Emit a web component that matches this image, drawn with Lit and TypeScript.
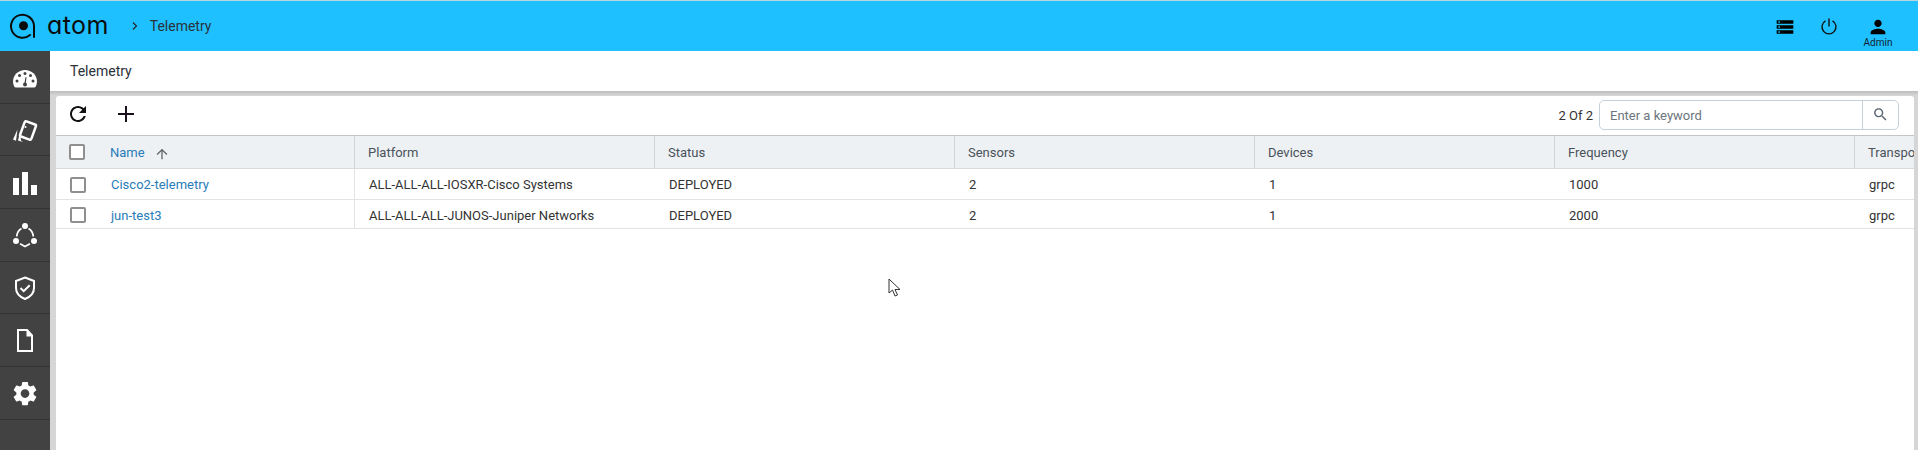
import { LitElement, html, css, svg } from "lit";
import { customElement } from "lit/decorators.js";

const sideIcons = [
  svg`<path fill="#fff" d="M13 6C6.400 6 1 11 1 17.500c0 1.800.4 3.400 1.200 5 .4.600 1 1 1.700 1h18.200c.7 0 1.300-.4 1.700-1 .8-1.600 1.200-3.200 1.200-5C25 11 19.600 6 13 6z"/><g fill="#424242"><circle cx="13" cy="9.500" r="1.500"/><circle cx="7.500" cy="11.500" r="1.500"/><circle cx="18.500" cy="11.500" r="1.500"/><circle cx="5" cy="17" r="1.500"/><circle cx="21" cy="17" r="1.500"/><circle cx="13" cy="20.500" r="2"/><path d="M12.200 20.500l1.300-7.500 1 .2-.8 7.500z"/></g>`,
  svg`<rect x="10" y="5.500" width="12" height="16" rx="1.500" fill="none" stroke="#fff" stroke-width="2.500" transform="rotate(20 16 13.500)"/><circle cx="13.500" cy="10" r="1" fill="#fff"/><path fill="#fff" d="M5.500 12.500 1 22.500l3 1.200zM8 15.500 6 23.500l5 1.500-2-1.500z"/>`,
  svg`<path fill="#fff" d="M1 9h6v17H1zM10 3h6v23h-6zM19 16h6v10h-6z"/>`,
  svg`<g fill="#fff"><circle cx="13" cy="4" r="3"/><circle cx="4" cy="19" r="3"/><circle cx="22" cy="19" r="3"/></g><g fill="none" stroke="#fff" stroke-width="1.700"><path d="M9.500 6.500C7 8 5 11 4.700 14.500M16.500 6.500c2.500 1.500 4.500 4.500 4.800 8M8 21.800l5 2.700 5-2.700"/></g>`,
  svg`<path fill="none" stroke="#fff" stroke-width="2" d="M13 2.500 22 6v7c0 5.500-4 9-9 11C8 22 4 18.500 4 13V6z"/><path fill="none" stroke="#fff" stroke-width="2" d="m8.500 13 3.200 3.200 6-6"/>`,
  svg`<path fill="none" stroke="#fff" stroke-width="2" d="M6 3h9l5 5.500V24H6z"/><path fill="#fff" d="M14.500 3h1l5 5.500v1h-6z"/>`,
  svg`<path fill="#fff" transform="translate(-1.500 -1) scale(1.210)" d="M19.140 12.940c.04-.3.060-.61.060-.94 0-.32-.02-.64-.07-.94l2.030-1.580c.18-.14.23-.41.120-.61l-1.920-3.320c-.12-.22-.37-.29-.59-.22l-2.390.96c-.5-.38-1.030-.7-1.620-.94l-.36-2.540c-.04-.24-.24-.41-.48-.41h-3.840c-.24 0-.43.170-.47.410l-.36 2.540c-.59.240-1.130.570-1.620.94l-2.390-.96c-.22-.08-.47 0-.59.220L2.740 8.870c-.12.210-.08.470.12.610l2.030 1.580c-.05.300-.09.630-.09.940s.02.640.07.940l-2.030 1.580c-.18.140-.23.410-.12.610l1.920 3.320c.12.220.37.290.59.220l2.390-.96c.5.380 1.030.7 1.620.94l.36 2.540c.05.240.24.410.48.410h3.840c.24 0 .44-.17.470-.41l.36-2.540c.59-.24 1.130-.56 1.620-.94l2.390.96c.22.080.47 0 .59-.22l1.920-3.320c.12-.22.070-.47-.12-.61l-2.010-1.580zM12 15.600c-1.980 0-3.600-1.620-3.600-3.600s1.620-3.600 3.600-3.600 3.600 1.620 3.600 3.600-1.620 3.600-3.600 3.600z"/>`,
];

const columns = ["Platform", "Status", "Sensors", "Devices", "Frequency", "Transport"];
const rows = [
  { name: "Cisco2-telemetry", cells: ["ALL-ALL-ALL-IOSXR-Cisco Systems", "DEPLOYED", "2", "1", "1000", "grpc"], tall: true },
  { name: "jun-test3", cells: ["ALL-ALL-ALL-JUNOS-Juniper Networks", "DEPLOYED", "2", "1", "2000", "grpc"], tall: false },
];

@customElement("app-root")
export class AppRoot extends LitElement {
  static styles = css`
    :host { display: block; width: 1918px; height: 450px; overflow: hidden; position: relative; font-family: Roboto, "Liberation Sans", sans-serif; font-size: 13px; color: #333; background: #d6d6d6; }
    svg { display: block; }
    .topline { height: 1px; background: #b9d5df; }
    .header { height: 50px; background: #1fc0ff; display: flex; align-items: center; color: #111; }
    .logo { margin-left: 9px; width: 27px; height: 27px; margin-top: -1px; flex: none; }
    .logotext { margin-left: 11px; font-family: Inter, sans-serif; font-feature-settings: "cv11"; font-weight: 400; font-size: 25px; letter-spacing: 0.4px; line-height: 1; color: #0b0b0b; margin-top: -1px; }
    .chev { margin-left: 21px; width: 10px; height: 10px; }
    .crumb { margin-left: 10px; color: #29333b; font-size: 14px; }
    .hright { margin-left: auto; display: flex; align-items: flex-start; height: 50px; }
    .hicon { width: 20px; height: 20px; margin-top: 16px; }
    .power { margin-left: 24px; margin-top: 15px; }
    .user { margin-left: 19px; margin-right: 20px; width: 40px; display: flex; flex-direction: column; align-items: center; }
    .user svg { width: 22px; height: 22px; margin-top: 15px; }
    .user span { font-size: 10px; line-height: 10px; color: #123; }
    .main { display: flex; height: 399px; }
    .side { width: 50px; background: #424242; flex: none; }
    .sitem { height: 52.7px; box-sizing: border-box; border-bottom: 1px solid #333; display: flex; align-items: center; justify-content: center; }
    .sitem svg { width: 26px; height: 26px; overflow: visible; }
    .content { flex: 1; min-width: 0; display: flex; flex-direction: column; }
    .title { height: 40px; background: #fff; padding-left: 20px; display: flex; align-items: center; font-size: 14px; color: #2b3138; flex: none; }
    .shadow { height: 4px; background: linear-gradient(#bdbdbd, #d4d4d4); flex: none; }
    .card { flex: 1; margin: 1px 4px 0 6px; background: #fff; border-radius: 3px 3px 0 0; overflow: hidden; display: flex; flex-direction: column; }
    .toolbar { height: 39px; flex: none; border-bottom: 1px solid #c2c4c6; display: flex; align-items: center; }
    .tool { width: 24px; height: 24px; color: #111; margin-top: -3px; }
    .refresh { margin-left: 10px; }
    .plus { margin-left: 24px; }
    .count { margin-left: auto; color: #333; margin-right: 6px; margin-top: -1px; }
    .search { width: 300px; height: 30px; margin-right: 15px; margin-top: -1px; box-sizing: border-box; border: 1px solid #c4d1db; border-radius: 5px; display: flex; align-items: center; }
    .ph { flex: 1; padding-left: 10px; color: #6c757d; height: 100%; display: flex; align-items: center; border-right: 1px solid #c4d1db; }
    .sbtn { width: 35px; display: flex; justify-content: center; }
    .sbtn svg { width: 17px; height: 17px; margin-top: -2px; }
    .table { display: grid; grid-template-columns: 299px repeat(6, 300px); width: 1858px; overflow: hidden; }
    .th { height: 33px; box-sizing: border-box; background: #eef1f4; border-bottom: 1px solid #d9dcdf; border-right: 1px solid #d2d5d8; display: flex; align-items: center; padding-left: 13px; color: #49525a; white-space: nowrap; }
    .td { box-sizing: border-box; border-bottom: 1px solid #e2e3e5; display: flex; align-items: center; padding-left: 14px; color: #333; white-space: nowrap; padding-top: 1px; }
    .h31 { height: 31px; }
    .h29 { height: 29px; padding-top: 2px; }
    .th.first { padding-left: 13px; }
    .td.first { padding-left: 14px; border-right: 1px solid #e2e3e5; }
    .box { width: 16px; height: 16px; box-sizing: border-box; border: 2px solid #8f8f8f; border-radius: 2px; background: #fff; flex: none; }
    .name { margin-left: 25px; color: #2a7cb8; }
    .sort { width: 16px; height: 16px; margin-left: 9px; margin-top: 3px; }
    .cursor { position: absolute; left: 888px; top: 278px; width: 14px; height: 20px; }
  `;

  render() {
    return html`
      <div class="topline"></div>
      <div class="header">
        <svg class="logo" viewBox="0 0 27 27"><path fill="none" stroke="#0b0b0b" stroke-width="2" stroke-linecap="round" d="M21 23A11.500 11.500 0 1 1 25 14V25"/><circle cx="14.500" cy="13.700" r="4.500" fill="#0b0b0b"/></svg>
        <span class="logotext">atom</span>
        <svg class="chev" viewBox="0 0 10 10"><path fill="none" stroke="#222" stroke-width="1.100" d="m3 1.500 3.500 3.500L3 8.500"/></svg>
        <span class="crumb">Telemetry</span>
        <div class="hright">
          <svg class="hicon" viewBox="0 0 24 24"><path fill="#000" d="M2 20h20v-4H2v4zm2-3h2v2H4v-2zM2 4v4h20V4H2zm4 3H4V5h2v2zm-4 7h20v-4H2v4zm2-3h2v2H4v-2z"/></svg>
          <svg class="hicon power" viewBox="0 0 20 20"><path fill="none" stroke="#111" stroke-width="1.400" d="M10 2.500v8M6.500 4.800a7 7 0 1 0 7 0"/></svg>
          <div class="user">
            <svg viewBox="0 0 24 24"><path fill="#000" d="M12 12c2.210 0 4-1.790 4-4s-1.790-4-4-4-4 1.790-4 4 1.790 4 4 4zm0 2c-2.670 0-8 1.340-8 4v2h16v-2c0-2.660-5.330-4-8-4z"/></svg>
            <span>Admin</span>
          </div>
        </div>
      </div>
      <div class="main">
        <nav class="side">
          ${sideIcons.map((i) => html`<div class="sitem"><svg viewBox="0 0 26 26">${i}</svg></div>`)}
        </nav>
        <div class="content">
          <div class="title">Telemetry</div>
          <div class="shadow"></div>
          <div class="card">
            <div class="toolbar">
              <svg class="tool refresh" viewBox="0 0 24 24"><path fill="#111" d="M17.650 6.350C16.200 4.900 14.210 4 12 4c-4.420 0-7.990 3.580-7.990 8s3.570 8 7.990 8c3.730 0 6.840-2.550 7.730-6h-2.080c-.82 2.330-3.040 4-5.650 4-3.310 0-6-2.690-6-6s2.690-6 6-6c1.660 0 3.140.69 4.220 1.780L13 11h7V4l-2.350 2.350z"/></svg>
              <svg class="tool plus" viewBox="0 0 24 24"><path fill="none" stroke="#1a1020" stroke-width="2" d="M12 4v16M4 12h16"/></svg>
              <span class="count">2 Of 2</span>
              <div class="search">
                <div class="ph">Enter a keyword</div>
                <div class="sbtn"><svg viewBox="0 0 24 24"><path fill="#5a6672" d="M15.500 14h-.79l-.28-.27C15.410 12.590 16 11.110 16 9.500 16 5.910 13.090 3 9.500 3S3 5.910 3 9.500 5.910 16 9.500 16c1.610 0 3.090-.59 4.230-1.570l.27.28v.79l5 4.990L20.490 19l-4.990-5zm-6 0C7.010 14 5 11.990 5 9.500S7.010 5 9.500 5 14 7.010 14 9.500 11.990 14 9.500 14z"/></svg></div>
              </div>
            </div>
            <div class="table">
              <div class="th first">
                <div class="box"></div>
                <span class="name">Name</span>
                <svg class="sort" viewBox="0 0 24 24"><path fill="#666" d="M4 12l1.410 1.410L11 7.830V20h2V7.830l5.580 5.590L20 12l-8-8-8 8z"/></svg>
              </div>
              ${columns.map((c) => html`<div class="th">${c}</div>`)}
              ${rows.map((r) => {
                const h = r.tall ? "h31" : "h29";
                return html`
                  <div class="td first ${h}"><div class="box"></div><span class="name">${r.name}</span></div>
                  ${r.cells.map((c) => html`<div class="td ${h}">${c}</div>`)}
                `;
              })}
            </div>
          </div>
        </div>
      </div>
      <svg class="cursor" viewBox="0 0 14 20"><path fill="#fff" stroke="#333" stroke-width="1" d="M1 1v14l3.500-3 2.500 6 2.500-1-2.500-5.500h5z"/></svg>
    `;
  }
}
